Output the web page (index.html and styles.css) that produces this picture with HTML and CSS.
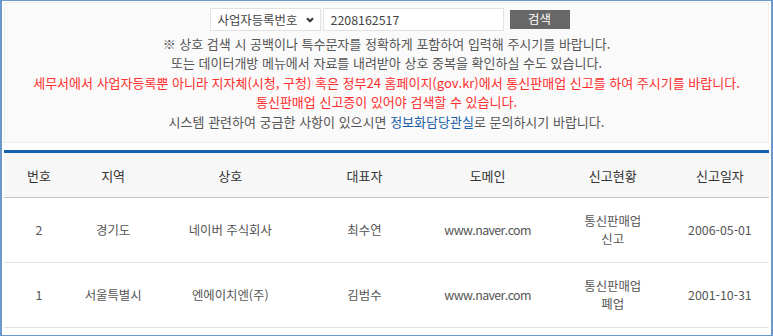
FILE: index.html
```html
<!DOCTYPE html>
<html lang="ko">
<head>
    <meta charset="UTF-8">
    <meta name="viewport" content="width=device-width, initial-scale=1.0">
    <title>통신판매사업자 조회</title>
    <link rel="stylesheet" href="styles.css">
</head>
<body>
    <div class="frame">
        <!-- 검색 영역 -->
        <div class="search-box">
            <form class="search-form" onsubmit="return false;">
                <div class="select-wrap">
                    <select class="search-type">
                        <option value="bizno">사업자등록번호</option>
                        <option value="name">상호</option>
                    </select>
                    <svg class="chevron" width="8" height="6" viewBox="0 0 8 6">
                        <path d="M1 1.2 L4 4.3 L7 1.2" fill="none" stroke="#333" stroke-width="2"/>
                    </svg>
                </div>
                <input type="text" class="search-input" value="2208162517">
                <button type="submit" class="search-btn">검색</button>
            </form>
            <p>※ 상호 검색 시 공백이나 특수문자를 정확하게 포함하여 입력해 주시기를 바랍니다.</p>
            <p>또는 데이터개방 메뉴에서 자료를 내려받아 상호 중복을 확인하실 수도 있습니다.</p>
            <p class="warn">세무서에서 사업자등록뿐 아니라 지자체(시청, 구청) 혹은 정부24 홈페이지(gov.kr)에서 통신판매업 신고를 하여 주시기를 바랍니다.</p>
            <p class="warn">통신판매업 신고증이 있어야 검색할 수 있습니다.</p>
            <p>시스템 관련하여 궁금한 사항이 있으시면 <a href="#">정보화담당관실</a>로 문의하시기 바랍니다.</p>
        </div>

        <!-- 결과 목록 -->
        <table class="result">
            <colgroup>
                <col style="width:70px">
                <col style="width:78px">
                <col style="width:156px">
                <col style="width:112px">
                <col style="width:134px">
                <col style="width:116px">
                <col style="width:98px">
            </colgroup>
            <thead>
                <tr>
                    <th>번호</th>
                    <th>지역</th>
                    <th>상호</th>
                    <th>대표자</th>
                    <th>도메인</th>
                    <th>신고현황</th>
                    <th>신고일자</th>
                </tr>
            </thead>
            <tbody>
                <tr>
                    <td>2</td>
                    <td>경기도</td>
                    <td>네이버 주식회사</td>
                    <td>최수연</td>
                    <td class="domain">www.naver.com</td>
                    <td>통신판매업<br>신고</td>
                    <td>2006-05-01</td>
                </tr>
                <tr>
                    <td>1</td>
                    <td>서울특별시</td>
                    <td>엔에이치엔(주)</td>
                    <td>김범수</td>
                    <td class="domain">www.naver.com</td>
                    <td>통신판매업<br>폐업</td>
                    <td>2001-10-31</td>
                </tr>
            </tbody>
        </table>
    </div>
</body>
</html>
```

FILE: styles.css
```css
body {
    margin: 0;
    padding: 0;
    background-color: #fff;
    font-family: "Noto Sans CJK KR", "Noto Sans", sans-serif;
    color: #555;
}
.frame {
    box-sizing: border-box;
    width: 773px;
    height: 336px;
    border: 1px solid #6b98cb;
    border-left-width: 2px;
    border-right-width: 2px;
    padding: 1px 2px 0 2px;
    overflow: hidden;
}
.search-box {
    background-color: #fafafa;
    border: 1px solid #ececec;
    padding: 5px 0 11px;
    text-align: center;
    font-size: 13px;
}
.search-form {
    display: flex;
    justify-content: center;
    align-items: center;
    margin-left: 6px;
    margin-bottom: 3px;
}
.select-wrap {
    position: relative;
}
.search-type {
    -webkit-appearance: none;
    appearance: none;
    box-sizing: border-box;
    width: 111px;
    height: 23px;
    padding: 0 0 0 7px;
    border: 1px solid #e2e2e2;
    border-radius: 0;
    background-color: #fff;
    font-family: inherit;
    font-size: 12.4px;
    color: #444;
    outline: none;
}
.chevron {
    position: absolute;
    right: 7px;
    top: 9px;
}
.search-input {
    box-sizing: border-box;
    width: 181px;
    height: 23px;
    margin-left: 2px;
    padding: 0 7px;
    border: 1px solid #e2e2e2;
    background-color: #fff;
    font-family: inherit;
    font-size: 12.4px;
    color: #444;
    outline: none;
}
.search-btn {
    box-sizing: border-box;
    width: 60px;
    height: 19px;
    margin-left: 6px;
    padding: 0;
    border: none;
    background-color: #676767;
    color: #fff;
    font-family: inherit;
    font-size: 12.4px;
    line-height: 19px;
    cursor: pointer;
}
.search-box p {
    margin: 0;
    line-height: 19.4px;
}
.search-box .warn {
    color: #ff2d2d;
}
.search-box a {
    color: #1a5ea8;
    text-decoration: none;
}
.result {
    width: 765px;
    margin-top: 7px;
    border-collapse: collapse;
    table-layout: fixed;
    border-top: 3px solid #1660b0;
    font-size: 12.4px;
}
.result th {
    height: 44px;
    padding: 0;
    background-color: #f7f7f7;
    border-bottom: 1px solid #c4c4c4;
    font-size: 13px;
    font-weight: normal;
    color: #333;
}
.result td {
    height: 64px;
    padding: 0;
    text-align: center;
    border-bottom: 1px solid #e2e2e2;
    line-height: 18px;
    color: #555;
}
.result .domain {
    letter-spacing: -0.6px;
}
```
